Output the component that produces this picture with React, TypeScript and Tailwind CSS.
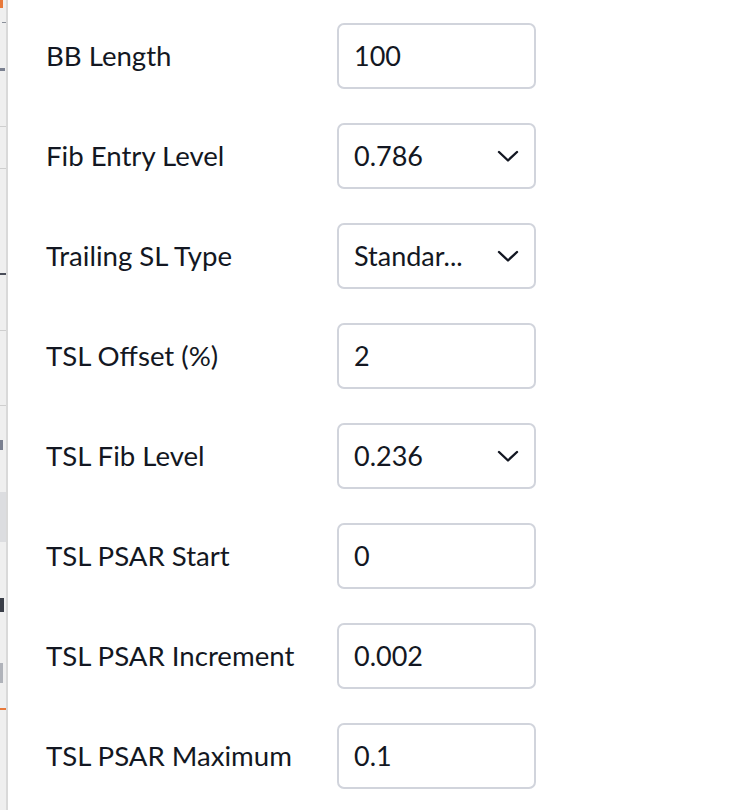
// ============================================
// DATOS
// ============================================

type Campo = { label: string; tipo: 'input' | 'select'; valor: string };

const campos: Campo[] = [
  { label: 'BB Length', tipo: 'input', valor: '100' },
  { label: 'Fib Entry Level', tipo: 'select', valor: '0.786' },
  { label: 'Trailing SL Type', tipo: 'select', valor: 'Standar...' },
  { label: 'TSL Offset (%)', tipo: 'input', valor: '2' },
  { label: 'TSL Fib Level', tipo: 'select', valor: '0.236' },
  { label: 'TSL PSAR Start', tipo: 'input', valor: '0' },
  { label: 'TSL PSAR Increment', tipo: 'input', valor: '0.002' },
  { label: 'TSL PSAR Maximum', tipo: 'input', valor: '0.1' },
];

const fuente = { fontFamily: '"Trebuchet MS", Lato, "DejaVu Sans", sans-serif' };

// ============================================
// COMPONENTES
// ============================================

function FondoLateral() {
  // franja de la página que queda detrás del diálogo
  return (
    <div className="w-[8px] shrink-0 bg-[#efefef] border-r-2 border-[#d9d9d9] flex flex-col">
      <div className="w-[3px] h-[8px] bg-[#e8793a]" />
      <div className="h-[14px]" />
      <div className="ml-[2px] w-[4px] h-[1px] bg-[#8a8f99]" />
      <div className="h-[45px]" />
      <div className="w-[5px] h-[3px] bg-[#7a8090]" />
      <div className="h-[55px]" />
      <div className="w-[6px] h-[1px] bg-[#cfcfcf]" />
      <div className="h-[41px]" />
      <div className="w-[6px] h-[1px] bg-[#cfcfcf]" />
      <div className="h-[104px]" />
      <div className="w-[6px] h-[2px] bg-[#4a4e59]" />
      <div className="h-[55px]" />
      <div className="w-[6px] h-[1px] bg-[#cfcfcf]" />
      <div className="h-[74px]" />
      <div className="w-[6px] h-[1px] bg-[#cfcfcf]" />
      <div className="h-[34px]" />
      <div className="w-[3px] h-[10px] bg-[#7a8090]" />
      <div className="h-[42px]" />
      <div className="w-[6px] h-[50px] bg-[#dcdde0]" />
      <div className="h-[56px]" />
      <div className="w-[4px] h-[14px] bg-[#3a3e48]" />
      <div className="h-[51px]" />
      <div className="w-[3px] h-[20px] bg-[#b0b3ba]" />
      <div className="h-[25px]" />
      <div className="w-[6px] h-[2px] bg-[#e8793a]" />
    </div>
  );
}

function Chevron() {
  return (
    <svg width="22" height="12" viewBox="0 0 22 12" fill="none" className="shrink-0">
      <path d="M2 2l9 8.5L20 2" stroke="#131722" strokeWidth="2.4" strokeLinecap="round" strokeLinejoin="round" />
    </svg>
  );
}

function Fila({ campo }: { campo: Campo }) {
  return (
    <div className="flex items-center">
      <div className="w-[291px] text-[27.6px] text-[#131722]" style={fuente}>
        {campo.label}
      </div>
      <div className="w-[199px] h-[66px] rounded-[7px] border-2 border-[#d1d4dc] bg-white flex items-center pl-[15px] pr-[15px]">
        <span className="flex-1 text-[27px] text-[#131722]" style={fuente}>
          {campo.valor}
        </span>
        {campo.tipo === 'select' && <Chevron />}
      </div>
    </div>
  );
}

export default function App() {
  return (
    <div className="w-[744px] h-[810px] bg-white flex overflow-hidden">
      <FondoLateral />
      <div className="flex flex-col gap-[34px] pl-[38px] pt-[23px]">
        {campos.map((campo) => (
          <Fila key={campo.label} campo={campo} />
        ))}
      </div>
    </div>
  );
}
